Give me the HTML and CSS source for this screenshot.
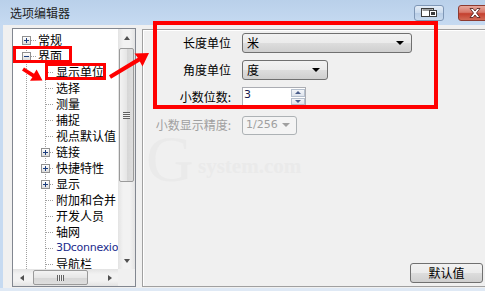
FILE: index.html
```html
<!DOCTYPE html>
<html lang="zh-CN">
<head>
    <meta charset="UTF-8">
    <meta name="viewport" content="width=device-width, initial-scale=1.0">
    <title>选项编辑器</title>
    <link rel="stylesheet" href="styles.css">
</head>
<body>
    <div class="window">
        <div class="titlebar">
            <span class="title">选项编辑器</span>
            <div class="controls">
                <div class="cap-btn restore">
                    <svg width="16" height="10" viewBox="0 0 16 10">
                        <rect x="0.5" y="0.5" width="12" height="8" fill="#fff" stroke="#3c3c3c"/>
                        <rect x="1.5" y="1.5" width="10" height="1" fill="#3c3c3c"/>
                        <rect x="8.5" y="2.5" width="7" height="6" fill="#fff" stroke="#3c3c3c"/>
                        <rect x="10" y="4" width="4" height="3" fill="#3c3c3c"/>
                    </svg>
                </div>
                <div class="cap-btn close">
                    <svg width="12" height="10" viewBox="0 0 12 10">
                        <path d="M1 0.5 L4 0.5 L6 3 L8 0.5 L11 0.5 L7.5 5 L11 9.5 L8 9.5 L6 7 L4 9.5 L1 9.5 L4.5 5 Z" fill="#fff" stroke="#4a1a14" stroke-width="0.8"/>
                    </svg>
                </div>
            </div>
        </div>

        <div class="client">
            <div class="tree-panel">
                <div class="tree-top">
                    <ul class="tree">
                        <li><div class="node l1"><span class="exp plus"></span><span class="dots"></span><span class="label">常规</span></div></li>
                        <li>
                            <div class="node l1"><span class="exp minus"></span><span class="dots"></span><span class="label">界面</span></div>
                            <ul class="children">
                                <li><div class="node l2"><span class="dots"></span><span class="label">显示单位</span></div></li>
                                <li><div class="node l2"><span class="dots"></span><span class="label">选择</span></div></li>
                                <li><div class="node l2"><span class="dots"></span><span class="label">测量</span></div></li>
                                <li><div class="node l2"><span class="dots"></span><span class="label">捕捉</span></div></li>
                                <li><div class="node l2"><span class="dots"></span><span class="label">视点默认值</span></div></li>
                                <li><div class="node l2x"><span class="exp plus"></span><span class="dots"></span><span class="label">链接</span></div></li>
                                <li><div class="node l2x"><span class="exp plus"></span><span class="dots"></span><span class="label">快捷特性</span></div></li>
                                <li><div class="node l2x"><span class="exp plus"></span><span class="dots"></span><span class="label">显示</span></div></li>
                                <li><div class="node l2"><span class="dots"></span><span class="label">附加和合并</span></div></li>
                                <li><div class="node l2"><span class="dots"></span><span class="label">开发人员</span></div></li>
                                <li><div class="node l2"><span class="dots"></span><span class="label">轴网</span></div></li>
                                <li><div class="node l2"><span class="dots"></span><span class="label latin">3Dconnexion</span></div></li>
                                <li><div class="node l2"><span class="dots"></span><span class="label">导航栏</span></div></li>
                            </ul>
                        </li>
                    </ul>
                    <div class="vscroll">
                        <div class="sb-btn"><span class="tri up"></span></div>
                        <div class="vtrack">
                            <div class="vthumb"><span class="grip-h"></span></div>
                        </div>
                        <div class="sb-btn"><span class="tri down"></span></div>
                    </div>
                </div>
                <div class="tree-bottom">
                    <div class="hscroll">
                        <div class="sb-btn"><span class="tri left"></span></div>
                        <div class="htrack">
                            <div class="hthumb"><span class="grip-v"></span></div>
                        </div>
                        <div class="sb-btn"><span class="tri right"></span></div>
                    </div>
                    <div class="corner"></div>
                </div>
            </div>

            <div class="options-panel">
                <div class="form">
                    <span class="field-label">长度单位</span>
                    <div class="combo wide"><span class="value">米</span><span class="arrow"></span></div>

                    <span class="field-label">角度单位</span>
                    <div class="combo narrow"><span class="value">度</span><span class="arrow"></span></div>

                    <span class="field-label">小数位数:</span>
                    <div class="spin">
                        <span class="spin-value">3</span>
                        <div class="spin-btns">
                            <span class="spin-btn"><span class="tri up small"></span></span>
                            <span class="spin-btn"><span class="tri down small"></span></span>
                        </div>
                    </div>

                    <span class="field-label disabled">小数显示精度:</span>
                    <div class="combo off"><span class="value">1/256</span><span class="arrow"></span></div>
                </div>
                <div class="footer">
                    <div class="btn">默认值</div>
                </div>
            </div>
        </div>

        <div class="watermark">
            <span class="wm-big">G</span>
            <span class="wm-small">system.com</span>
        </div>

        <svg class="annotations" width="485" height="291" viewBox="0 0 485 291">
            <rect x="14.5" y="47.5" width="56" height="14" fill="none" stroke="#f00" stroke-width="3"/>
            <rect x="46.5" y="64.5" width="58" height="14" fill="none" stroke="#f00" stroke-width="3"/>
            <rect x="155" y="23" width="281" height="84" fill="none" stroke="#f00" stroke-width="4"/>
            <polygon points="22,70.5 24,67.5 34,73.8 36.6,69.5 42.5,80.5 30,80.8 32.4,77.3" fill="#f00"/>
            <polygon points="109,75.3 111,78.7 139.8,61.5 142.5,66.5 149,53 134.5,53.5 137.8,57.8" fill="#f00"/>
        </svg>
    </div>
</body>
</html>
```

FILE: styles.css
```css
* {
    margin: 0;
    padding: 0;
    box-sizing: border-box;
}

body {
    font-family: "Noto Sans CJK SC", "Noto Sans", sans-serif;
    font-size: 12px;
    color: #000;
    background: #f0f0f0;
}

.window {
    position: relative;
    width: 485px;
    height: 291px;
    overflow: hidden;
    background: #f0f0f0;
    border-bottom: 3px solid #dfe9f5;
}

/* title bar */

.titlebar {
    height: 25px;
    display: flex;
    align-items: flex-start;
    background: linear-gradient(#b9d0ea, #c6daf1);
}

.title {
    padding: 5px 0 0 10px;
    font-size: 12px;
    line-height: 16px;
    color: #1e1e1e;
}

.controls {
    margin-left: auto;
    margin-right: -16px;
    margin-top: 5px;
    display: flex;
    gap: 14px;
}

.cap-btn {
    height: 16px;
    border-radius: 3px;
    display: flex;
    align-items: center;
    justify-content: center;
}

.cap-btn.restore {
    width: 30px;
    border: 1px solid #7f97b6;
    background: linear-gradient(#e4edf7 0%, #cbdbee 50%, #b8cde6 51%, #c9dbef 100%);
}

.cap-btn.close {
    width: 43px;
    border: 1px solid #8d3a30;
    background: linear-gradient(#e6a89c 0%, #d8786a 45%, #c4402f 55%, #d26a55 100%);
    justify-content: flex-start;
    padding-left: 10px;
}

/* client area */

.client {
    display: flex;
    align-items: flex-start;
    height: 263px;
    border-left: 3px solid #c6daf1;
    padding-left: 9px;
}

.tree-panel {
    flex: none;
    width: 124px;
    height: 259px;
    margin-top: 3px;
    border: 1px solid #828790;
    background: #fff;
    display: flex;
    flex-direction: column;
}

.tree-top {
    flex: 1;
    display: flex;
    min-height: 0;
}

.tree {
    flex: 1;
    list-style: none;
    overflow: hidden;
    padding-top: 3px;
    background-image: repeating-linear-gradient(to bottom, #a0a0a0 0 1px, transparent 1px 2px);
    background-size: 1px 100%;
    background-position: 13px 11px;
    background-repeat: no-repeat;
}

.children {
    list-style: none;
    background-image: repeating-linear-gradient(to bottom, #a0a0a0 0 1px, transparent 1px 2px);
    background-size: 1px 100%;
    background-position: 32px 0;
    background-repeat: no-repeat;
}

.node {
    height: 16px;
    display: flex;
    align-items: center;
    white-space: nowrap;
    line-height: 16px;
}

.node.l1 { padding-left: 9px; }
.node.l2 { padding-left: 33px; }
.node.l2x { padding-left: 28px; }

.exp {
    position: relative;
    flex: none;
    width: 9px;
    height: 9px;
    border: 1px solid #919191;
    background: linear-gradient(#ffffff, #dcdcdc);
}

.exp::before {
    content: "";
    position: absolute;
    left: 1px;
    top: 3px;
    width: 5px;
    height: 1px;
    background: #1c3e7e;
}

.exp.plus::after {
    content: "";
    position: absolute;
    left: 3px;
    top: 1px;
    width: 1px;
    height: 5px;
    background: #1c3e7e;
}

.dots {
    flex: none;
    height: 1px;
    width: 5px;
    margin-right: 2px;
    background: repeating-linear-gradient(to right, #a0a0a0 0 1px, transparent 1px 2px);
}

.l2 .dots { width: 8px; }
.l2x .dots { width: 4px; }

.label {
    font-size: 12px;
}

.label.latin {
    font-family: "DejaVu Sans", sans-serif;
    font-size: 11px;
    color: #1a2b8c;
    letter-spacing: -0.3px;
}

/* scroll bars */

.vscroll {
    flex: none;
    width: 17px;
    display: flex;
    flex-direction: column;
    background: linear-gradient(to right, #e3e3e3, #f2f2f2 30%, #f2f2f2 70%, #e3e3e3);
}

.sb-btn {
    flex: none;
    width: 17px;
    height: 17px;
    display: flex;
    align-items: center;
    justify-content: center;
}

.vtrack {
    flex: 1;
    padding: 2px 1px 0;
}

.vthumb {
    height: 134px;
    border: 1px solid #9a9a9a;
    border-radius: 2px;
    background: linear-gradient(to right, #f3f3f3, #e6e6e6 50%, #d6d6d6 51%, #dedede);
    display: flex;
    align-items: center;
    justify-content: center;
}

.grip-h {
    width: 7px;
    height: 7px;
    background: repeating-linear-gradient(to bottom, #616161 0 1px, #f0f0f0 1px 2px);
}

.tree-bottom {
    flex: none;
    height: 17px;
    display: flex;
}

.hscroll {
    flex: 1;
    display: flex;
    background: linear-gradient(#e3e3e3, #f2f2f2 30%, #f2f2f2 70%, #e3e3e3);
}

.htrack {
    flex: 1;
    padding: 1px 0 1px 3px;
}

.hthumb {
    width: 55px;
    height: 100%;
    border: 1px solid #9a9a9a;
    border-radius: 2px;
    background: linear-gradient(#f3f3f3, #e6e6e6 50%, #d6d6d6 51%, #dedede);
    display: flex;
    align-items: center;
    justify-content: center;
}

.grip-v {
    width: 7px;
    height: 6px;
    background: repeating-linear-gradient(to right, #616161 0 1px, #f0f0f0 1px 2px);
}

.corner {
    flex: none;
    width: 17px;
    background: #f0f0f0;
}

.tri {
    width: 0;
    height: 0;
    border-style: solid;
    border-color: transparent;
}

.tri.up { border-width: 0 3.5px 4px; border-bottom-color: #505050; }
.tri.down { border-width: 4px 3.5px 0; border-top-color: #505050; }
.tri.left { border-width: 3.5px 4px 3.5px 0; border-right-color: #505050; }
.tri.right { border-width: 3.5px 0 3.5px 4px; border-left-color: #505050; }

.tri.up.small { border-width: 0 3px 3px; border-bottom-color: #4a5d8a; }
.tri.down.small { border-width: 3px 3px 0; border-top-color: #4a5d8a; }

/* options panel */

.options-panel {
    flex: none;
    width: 347px;
    height: 258px;
    margin-left: 6px;
    margin-top: 4px;
    border: 1px solid #a0a0a0;
    box-shadow: inset 1px 1px 0 #fff;
    display: flex;
    flex-direction: column;
}

.form {
    display: grid;
    grid-template-columns: 85px auto;
    column-gap: 11px;
    row-gap: 7px;
    padding: 3px 0 0 3px;
    align-items: center;
    justify-items: start;
}

.field-label {
    justify-self: end;
    line-height: 20px;
    font-size: 12px;
}

.field-label.disabled {
    color: #a0a0a0;
    white-space: nowrap;
    margin-top: 1px;
}

.combo {
    height: 20px;
    display: flex;
    align-items: center;
    border: 1px solid #707070;
    border-radius: 3px;
    background: linear-gradient(#f2f2f2, #ebebeb 50%, #dddddd 51%, #cfcfcf);
    padding-left: 4px;
    padding-right: 7px;
}

.combo .value {
    flex: 1;
    line-height: 18px;
}

.combo .arrow {
    width: 0;
    height: 0;
    border-style: solid;
    border-width: 4px 4px 0;
    border-color: #000 transparent transparent;
}

.combo.wide { width: 170px; }
.combo.narrow { width: 86px; }

.combo.off {
    width: 55px;
    height: 19px;
    margin-top: 1px;
    border-color: #adb2b5;
    background: #f4f4f4;
    color: #a0a0a0;
    padding-left: 3px;
    padding-right: 6px;
    font-family: "DejaVu Sans", sans-serif;
    font-size: 11px;
}

.combo.off .arrow {
    border-top-color: #a0a0a0;
}

.spin {
    width: 64px;
    height: 20px;
    display: flex;
    border: 1px solid #abadb3;
    background: #fff;
}

.spin-value {
    flex: 1;
    padding-left: 1px;
    font-family: "DejaVu Sans", sans-serif;
    font-size: 11px;
    line-height: 14px;
    color: #1a1a50;
}

.spin-btns {
    width: 14px;
    display: flex;
    flex-direction: column;
    gap: 1px;
    padding: 1px 0;
}

.spin-btn {
    flex: 1;
    display: flex;
    align-items: center;
    justify-content: center;
    border: 1px solid #b5bfcd;
    background: linear-gradient(#f4f6f9, #dde3ec);
}

.footer {
    margin-top: auto;
    display: flex;
    justify-content: flex-end;
    padding: 0 5px 3px 0;
}

.btn {
    width: 73px;
    height: 20px;
    border: 1px solid #707070;
    border-radius: 3px;
    background: linear-gradient(#f2f2f2, #ebebeb 50%, #dddddd 51%, #cfcfcf);
    text-align: center;
    line-height: 18px;
    font-size: 12px;
}

/* faint watermark */

.watermark {
    position: absolute;
    left: 146px;
    top: 126px;
    color: #eaeaea;
    pointer-events: none;
}

.wm-big {
    display: block;
    font-family: "Liberation Serif", serif;
    font-size: 66px;
    line-height: 66px;
}

.wm-small {
    position: absolute;
    left: 52px;
    top: 28px;
    font-family: "Liberation Serif", serif;
    font-weight: bold;
    font-size: 21px;
}

.annotations {
    position: absolute;
    left: 0;
    top: 0;
    pointer-events: none;
}
```
